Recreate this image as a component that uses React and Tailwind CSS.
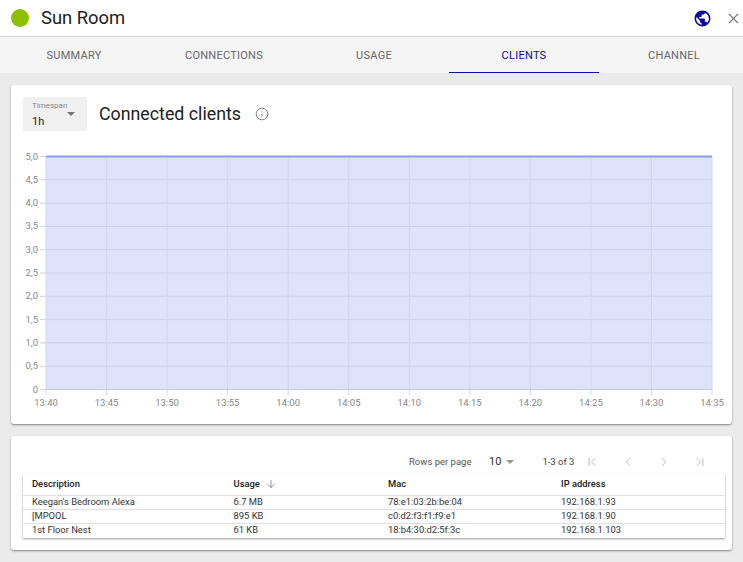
import { ChevronLeft, ChevronRight, ChevronFirst, ChevronLast, ArrowDown, Info, X } from 'lucide-react';

const tabs = ['Summary', 'Connections', 'Usage', 'Clients', 'Channel'];
const times = ['13:40', '13:45', '13:50', '13:55', '14:00', '14:05', '14:10', '14:15', '14:20', '14:25', '14:30', '14:35'];
const ticks = ['5,0', '4,5', '4,0', '3,5', '3,0', '2,5', '2,0', '1,5', '1,0', '0,5', '0'];
const rows = [
  { name: "Keegan's Bedroom Alexa", usage: '6.7 MB', mac: '78:e1:03:2b:be:04', ip: '192.168.1.93' },
  { name: '[MPOOL', usage: '895 KB', mac: 'c0:d2:f3:f1:f9:e1', ip: '192.168.1.90' },
  { name: '1st Floor Nest', usage: '61 KB', mac: '18:b4:30:d2:5f:3c', ip: '192.168.1.103' },
];

const LEFT = 46;
const RIGHT = 712;
const TOP = 156.5;
const BOTTOM = 389.5;

const Chart = () => {
  const stepX = (RIGHT - LEFT) / 11;
  const stepY = (BOTTOM - TOP) / 10;
  return (
    <svg width="720" height="265" viewBox="0 0 720 265" className="block">
      {/* svg origin is shifted so coordinates below match the page */}
      <g transform="translate(-11 -146)">
        <rect x={LEFT} y={TOP} width={RIGHT - LEFT} height={BOTTOM - TOP} fill="#dee2fb" />
        {ticks.map((t, i) => (
          <g key={t}>
            <line x1={LEFT - 6} x2={RIGHT} y1={TOP + i * stepY} y2={TOP + i * stepY} stroke="#cdd1ec" />
            <text x={38} y={TOP + i * stepY + 3} textAnchor="end" fontSize="9.5" fill="#888">{t}</text>
          </g>
        ))}
        {times.map((t, i) => (
          <g key={t}>
            <line x1={LEFT + i * stepX} x2={LEFT + i * stepX} y1={TOP} y2={BOTTOM + 6} stroke="#d2d6ee" />
            <text x={LEFT + i * stepX} y={406} textAnchor="middle" fontSize="9.5" fill="#888">{t}</text>
          </g>
        ))}
        <line x1={LEFT} x2={RIGHT} y1={BOTTOM} y2={BOTTOM} stroke="#c5c9e8" />
        <line x1={LEFT} x2={RIGHT} y1={156.5} y2={156.5} stroke="#8c9bf5" strokeWidth="2" />
      </g>
    </svg>
  );
};

const GlobeIcon = () => (
  <svg viewBox="0 0 24 24" className="w-[19px] h-[19px]" fill="#0a0a9a">
    <path d="M12 2C6.48 2 2 6.48 2 12s4.48 10 10 10 10-4.48 10-10S17.52 2 12 2zm-1 17.93c-3.95-.49-7-3.85-7-7.93 0-.62.08-1.21.21-1.79L9 15v1c0 1.1.9 2 2 2v1.93zm6.9-2.54c-.26-.81-1-1.39-1.9-1.39h-1v-3c0-.55-.45-1-1-1H8v-2h2c.55 0 1-.45 1-1V7h2c1.1 0 2-.9 2-2v-.41c2.93 1.19 5 4.06 5 7.41 0 2.08-.8 3.97-2.1 5.39z" />
  </svg>
);

const App = () => {
  return (
    <div className="w-[743px] h-[562px] overflow-hidden flex flex-col bg-[#ebebeb] font-['Roboto',sans-serif]">
      {/* Title bar */}
      <div className="h-[37px] shrink-0 bg-white border-b border-[#d4d4d4] flex items-center pl-[11px] pr-px">
        <div className="w-[18px] h-[18px] rounded-full bg-[#8cc000]" />
        <h1 className="ml-[12px] text-[18.4px] leading-none text-[#212121]">Sun Room</h1>
        <div className="ml-auto flex items-center gap-[13px]">
          <GlobeIcon />
          <X size={17} strokeWidth={1.5} className="text-[#757575]" />
        </div>
      </div>

      {/* Tabs */}
      <div className="h-[36px] shrink-0 bg-[#f5f5f5] flex -ml-px">
        {tabs.map((tab) => (
          <div
            key={tab}
            className={`w-[150px] shrink-0 pt-[3px] flex items-center justify-center text-[11px] uppercase tracking-[0.25px] border-b ${
              tab === 'Clients' ? 'text-[#0a0aa8] border-[#0a0aa8]' : 'text-[#666666] border-transparent'
            }`}
          >
            {tab}
          </div>
        ))}
      </div>

      <div className="flex-1 px-[11px] pt-[12px] flex flex-col gap-[12px]">
        {/* Chart card */}
        <div className="h-[339px] w-[721px] shrink-0 bg-white rounded-[3px] shadow-[0_1px_2px_rgba(0,0,0,0.45)] flex flex-col">
          <div className="h-[61px] shrink-0 pl-[12px] pt-[12px] flex items-start">
            <div className="w-[64px] h-[34px] bg-[#f0f0f0] rounded-t-[3px] px-[9px] pt-[4px] relative">
              <div className="text-[8px] leading-[9px] text-[#8a8a8a]">Timespan</div>
              <div className="text-[11px] leading-[12px] mt-[6px] text-[#212121]">1h</div>
              <div className="absolute right-[12px] top-[15px] w-0 h-0 border-x-[4px] border-x-transparent border-t-[4px] border-t-[#757575]" />
            </div>
            <h2 className="ml-[12px] mt-[6px] text-[17.8px] leading-[22px] text-[#212121]">Connected clients</h2>
            <Info size={14} strokeWidth={1.5} className="ml-[14px] mt-[10px] text-[#757575]" />
          </div>
          <Chart />
        </div>

        {/* Table card */}
        <div className="h-[114px] w-[721px] shrink-0 bg-white rounded-[3px] shadow-[0_1px_2px_rgba(0,0,0,0.45)] px-[12px] pt-[15px]">
          <div className="h-[22px] flex items-center text-[9.5px] text-[#555555] pl-[386px]">
            <span className="w-[80px]">Rows per page</span>
            <span className="text-[11px] text-[#333333]">10</span>
            <span className="ml-[5px] w-0 h-0 border-x-[4px] border-x-transparent border-t-[4px] border-t-[#9a9a9a]" />
            <span className="ml-[28px] text-[#444444]">1-3 of 3</span>
            <div className="ml-[11px] flex items-center gap-[22px] text-[#b0b0b0]">
              <ChevronFirst size={14} strokeWidth={1.5} />
              <ChevronLeft size={14} strokeWidth={1.5} />
              <ChevronRight size={14} strokeWidth={1.5} />
              <ChevronLast size={14} strokeWidth={1.5} />
            </div>
          </div>
          <div className="mt-[1px] w-[702px] shadow-[0_1px_2px_rgba(0,0,0,0.4)] text-[9.4px] text-[#333333]">
            <div className="grid grid-cols-[201.5px_154.5px_173px_1fr] pl-[9px] h-[22px] items-center font-medium text-[#212121] border-b border-[#e0e0e0]">
              <span>Description</span>
              <span className="flex items-center gap-[5px]">Usage <ArrowDown size={12} strokeWidth={1.5} className="text-[#757575]" /></span>
              <span>Mac</span>
              <span>IP address</span>
            </div>
            {rows.map((row, i) => (
              <div
                key={row.ip}
                className={`grid grid-cols-[201.5px_154.5px_173px_1fr] pl-[9px] h-[14px] pb-[1px] leading-[12px] items-start ${i < 2 ? 'border-b border-[#e0e0e0]' : ''}`}
              >
                <span>{row.name}</span>
                <span>{row.usage}</span>
                <span>{row.mac}</span>
                <span>{row.ip}</span>
              </div>
            ))}
          </div>
        </div>
      </div>
    </div>
  );
};

export default App;
